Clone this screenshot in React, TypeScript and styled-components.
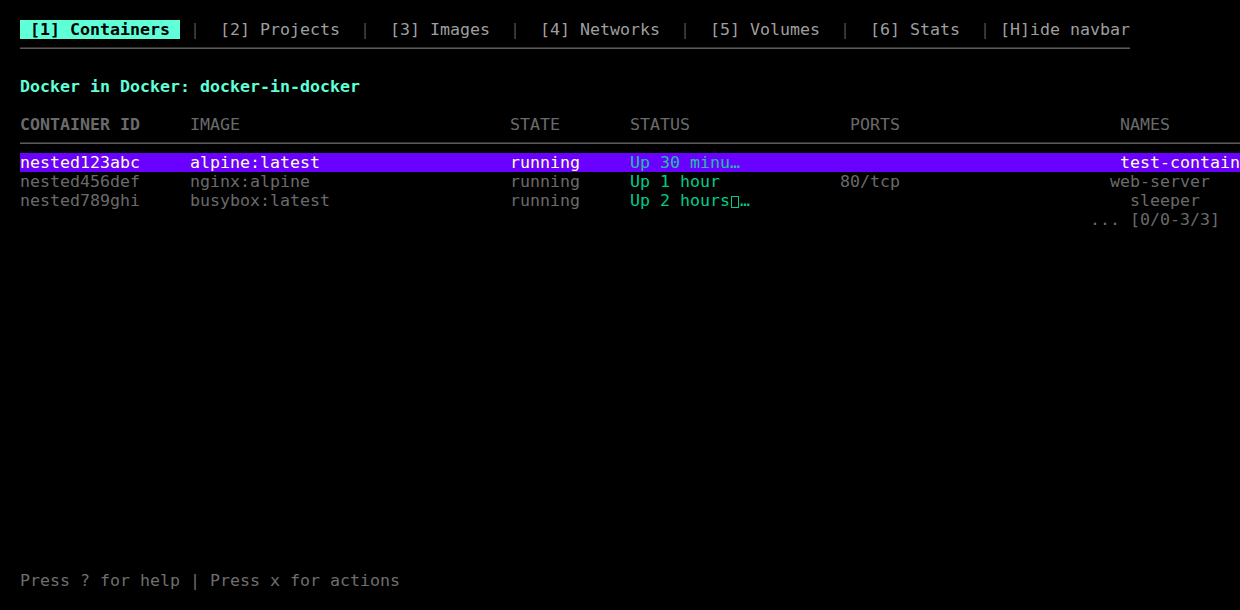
import React from "react";
import styled, { createGlobalStyle } from "styled-components";

const Global = createGlobalStyle`
  html, body { margin: 0; padding: 0; background: #000; }
  body {
    font-family: "DejaVu Sans Mono", "Liberation Mono", monospace;
    font-size: 16.61px;
    line-height: 19px;
  }
`;

const Screen = styled.div`
  box-sizing: border-box;
  width: 1240px;
  height: 610px;
  padding: 20px 0 20px 20px;
  display: flex;
  flex-direction: column;
  background: #000;
  color: #9a9a9a;
  overflow: hidden;
  white-space: pre;
`;

const Line = styled.div<{ $gap?: number }>`
  height: 19px;
  line-height: 19px;
  margin-top: ${(p) => (p.$gap ?? 0) * 19}px;
  display: flex;
  overflow: hidden;
`;

const NavItem = styled.span<{ $active?: boolean; $bare?: boolean }>`
  padding: 0 ${(p) => (p.$bare ? "0" : "10px")};
  background: ${(p) => (p.$active ? "#5fffd7" : "transparent")};
  color: ${(p) => (p.$active ? "#000" : "#9e9e9e")};
  font-weight: ${(p) => (p.$active ? 700 : 400)};
`;

const Sep = styled.span`
  color: #4a4a4a;
`;

const Rule = styled.div<{ $chars: number }>`
  height: 19px;
  line-height: 19px;
  color: #5a5a5a;
  overflow: hidden;
  width: ${(p) => p.$chars * 10}px;
`;

const Title = styled.div`
  height: 19px;
  color: #5fffd7;
  font-weight: 700;
`;

const TableRow = styled.div<{ $selected?: boolean }>`
  display: grid;
  grid-template-columns: 170px 320px 120px 210px 250px 1fr;
  height: 19px;
  line-height: 19px;
  background: ${(p) => (p.$selected ? "#6a00ff" : "transparent")};
  color: ${(p) => (p.$selected ? "#ffffd7" : "#6a6a6a")};
`;

const HeaderRow = styled(TableRow)`
  margin-top: 19px;
  color: #6a6a6a;
`;

const Cell = styled.span<{ $indent?: number; $bold?: boolean; $tone?: "status" | "statusSel" }>`
  overflow: hidden;
  white-space: pre;
  padding-left: ${(p) => (p.$indent ?? 0) * 10}px;
  font-weight: ${(p) => (p.$bold ? 700 : 400)};
  color: ${(p) =>
    p.$tone === "status" ? "#00cc88" : p.$tone === "statusSel" ? "#1fc0a0" : "inherit"};
`;

const Tofu = styled.span`
  display: inline-block;
  box-sizing: border-box;
  width: 8px;
  height: 12px;
  margin: 0 1px;
  border: 1px solid currentColor;
  vertical-align: -2px;
`;

const Footer = styled.div`
  margin-top: auto;
  height: 19px;
  color: #6e6e6e;
`;

const navItems = ["[2] Projects", "[3] Images", "[4] Networks", "[5] Volumes", "[6] Stats"];

type Row = {
  id: string;
  image: string;
  state: string;
  status: React.ReactNode;
  ports: string;
  name: string;
  nameIndent: number;
  selected?: boolean;
};

const rows: Row[] = [
  {
    id: "nested123abc",
    image: "alpine:latest",
    state: "running",
    status: "Up 30 minu…",
    ports: "",
    name: "test-contain",
    nameIndent: 3,
    selected: true,
  },
  {
    id: "nested456def",
    image: "nginx:alpine",
    state: "running",
    status: "Up 1 hour",
    ports: "80/tcp",
    name: "web-server",
    nameIndent: 2,
  },
  {
    id: "nested789ghi",
    image: "busybox:latest",
    state: "running",
    status: (
      <>
        Up 2 hours<Tofu />…
      </>
    ),
    ports: "",
    name: "sleeper",
    nameIndent: 4,
  },
];

export default function App() {
  return (
    <>
      <Global />
      <Screen>
        <Line>
          <NavItem $active>[1] Containers</NavItem>
          {navItems.map((n) => (
            <React.Fragment key={n}>
              <Sep> | </Sep>
              <NavItem>{n}</NavItem>
            </React.Fragment>
          ))}
          <Sep> | </Sep>
          <NavItem $bare>[H]ide navbar</NavItem>
        </Line>
        <Rule $chars={111}>{"─".repeat(111)}</Rule>
        <Line $gap={1}>
          <Title>Docker in Docker: docker-in-docker</Title>
        </Line>
        <HeaderRow>
          <Cell $bold>CONTAINER ID</Cell>
          <Cell>IMAGE</Cell>
          <Cell>STATE</Cell>
          <Cell>STATUS</Cell>
          <Cell $indent={1}>PORTS</Cell>
          <Cell $indent={3}>NAMES</Cell>
        </HeaderRow>
        <Rule $chars={122}>{"─".repeat(122)}</Rule>
        {rows.map((r) => (
          <TableRow key={r.id} $selected={r.selected}>
            <Cell>{r.id}</Cell>
            <Cell>{r.image}</Cell>
            <Cell>{r.state}</Cell>
            <Cell $tone={r.selected ? "statusSel" : "status"}>{r.status}</Cell>
            <Cell>{r.ports}</Cell>
            <Cell $indent={r.nameIndent}>{r.name}</Cell>
          </TableRow>
        ))}
        <TableRow>
          <Cell />
          <Cell />
          <Cell />
          <Cell />
          <Cell />
          <Cell>... [0/0-3/3]</Cell>
        </TableRow>
        <Footer>Press ? for help | Press x for actions</Footer>
      </Screen>
    </>
  );
}
